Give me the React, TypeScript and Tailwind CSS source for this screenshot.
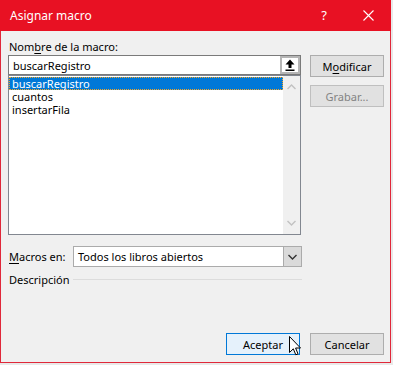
import React from "react";

const font = { fontFamily: '"Noto Sans", "Open Sans", sans-serif' };

function Chevron({ up, color }: { up?: boolean; color: string }) {
  return (
    <svg width="9" height="6" viewBox="0 0 9 6">
      <path
        d={up ? "M0.5 5 L4.5 1 L8.5 5" : "M0.5 1 L4.5 5 L8.5 1"}
        fill="none"
        stroke={color}
        strokeWidth="1.4"
      />
    </svg>
  );
}

export default function App() {
  return (
    <div className="w-[393px] h-[365px] bg-[#e9e9e9] relative overflow-hidden text-[11px] text-black" style={font}>
      <div className="w-[391px] h-[363px] flex flex-col">
        {/* Title bar */}
        <div className="h-[31px] bg-[#E81123] flex items-center text-white shrink-0">
          <span className="ml-[10px] text-[12px] leading-none">Asignar macro</span>
          <span className="ml-auto mr-[36px] text-[13px] leading-none">?</span>
          <svg width="11" height="11" viewBox="0 0 11 11" className="mr-[17px]">
            <path d="M0.5 0.5 L10.5 10.5 M10.5 0.5 L0.5 10.5" stroke="white" strokeWidth="1.1" />
          </svg>
        </div>
        {/* Body */}
        <div className="flex-1 bg-[#F0F0F0] border-l border-r border-b border-[#E0283A] flex flex-col">
          <div className="flex">
            {/* Left column */}
            <div className="ml-[7px] w-[293px] flex flex-col">
              <div className="mt-[8px] h-[16px] leading-[16px] pl-[1px]">
                Nom<span className="underline underline-offset-2">b</span>re de la macro:
              </div>
              <div className="h-[20px] bg-white border border-[#7A7A7A] flex items-center">
                <span className="pl-[4px] leading-[13px]">buscarRegistro</span>
                <div className="ml-auto h-[18px] w-[20px] border-2 border-[#B5B5B5] bg-white flex items-center justify-center">
                  <svg width="10" height="12" viewBox="0 0 10 12">
                    <path d="M5 0.5 L9.5 5.5 L6.5 5.5 L6.5 9 L3.5 9 L3.5 5.5 L0.5 5.5 Z" fill="black" />
                    <rect x="0.5" y="10.5" width="9" height="1.5" fill="black" />
                  </svg>
                </div>
              </div>
              <div className="h-[160px] bg-white border border-[#828790] flex">
                <div className="flex-1 flex flex-col pt-[1px]">
                  <div className="h-[13px] bg-[#0078D7] text-white border border-dotted border-[#F5A623] pl-[2px] leading-[11px]">
                    buscarRegistro
                  </div>
                  <div className="h-[13px] pl-[3px] leading-[13px]">cuantos</div>
                  <div className="h-[13px] pl-[3px] leading-[13px]">insertarFila</div>
                </div>
                <div className="w-[17px] bg-[#F0F0F0] flex flex-col items-center justify-between py-[8px]">
                  <Chevron up color="#C2C2C2" />
                  <Chevron color="#C2C2C2" />
                </div>
              </div>
            </div>
            {/* Right column */}
            <div className="ml-[9px] w-[74px] flex flex-col">
              <div className="mt-[24px] h-[22px] bg-[#E1E1E1] border border-[#ADADAD] flex items-center justify-center leading-none">
                M<span className="underline underline-offset-2">o</span>dificar
              </div>
              <div className="mt-[8px] h-[22px] bg-[#E1E1E1] border border-[#BFBFBF] flex items-center justify-center leading-none text-[#838383]">
                Grabar...
              </div>
            </div>
          </div>
          {/* Macros en */}
          <div className="mt-[11px] flex items-center h-[21px]">
            <span className="ml-[8px] w-[64px] leading-none">
              <span className="underline underline-offset-2">M</span>acros en:
            </span>
            <div className="w-[229px] h-[21px] bg-white border border-[#ABABAB] flex items-center">
              <span className="pl-[4px] leading-none">Todos los libros abiertos</span>
              <div className="ml-auto h-full w-[18px] bg-[#DADADA] border-l border-[#ABABAB] flex items-center justify-center">
                <Chevron color="#333333" />
              </div>
            </div>
          </div>
          {/* Descripción */}
          <div className="mt-[4px] flex items-center h-[16px]">
            <span className="ml-[8px] w-[64px] leading-none">Descripción</span>
            <div className="w-[229px] h-[1px] bg-[#DCDCDC]" />
          </div>
          {/* Bottom buttons */}
          <div className="mt-auto mb-[7px] flex justify-end pr-[6px] gap-[10px]">
            <div className="w-[74px] h-[22px] bg-[#E5F1FB] border border-[#0078D7] flex items-center justify-center leading-none">
              Aceptar
            </div>
            <div className="w-[74px] h-[22px] bg-[#E1E1E1] border border-[#ADADAD] flex items-center justify-center leading-none">
              Cancelar
            </div>
          </div>
        </div>
      </div>
      {/* Cursor */}
      <svg width="13" height="21" viewBox="0 0 13 21" className="absolute left-[289px] top-[336px]">
        <path
          d="M0.5 0.5 L0.5 16.5 L4.3 12.8 L6.8 18.8 L9 17.9 L6.6 12 L11.5 12 Z"
          fill="white"
          stroke="black"
          strokeWidth="1"
          strokeLinejoin="miter"
        />
      </svg>
    </div>
  );
}
